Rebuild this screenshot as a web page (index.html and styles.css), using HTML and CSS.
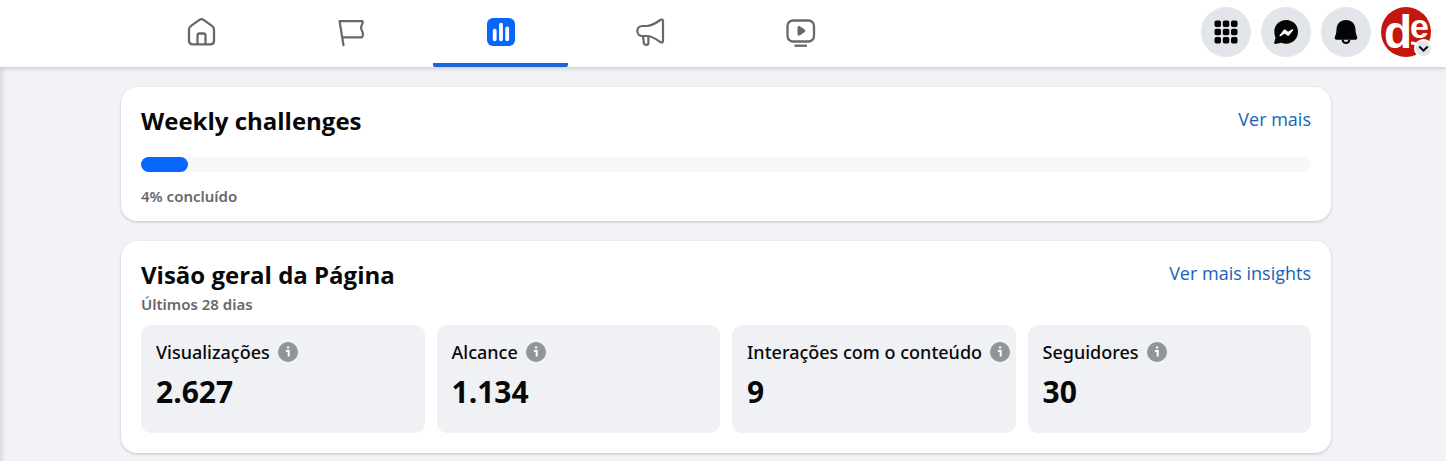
FILE: index.html
```html
<!DOCTYPE html>
<html lang="pt-BR">
<head>
  <meta charset="UTF-8">
  <meta name="viewport" content="width=device-width, initial-scale=1.0">
  <title>Visão geral da Página</title>
  <link rel="stylesheet" href="styles.css">
</head>
<body>
  <header class="topbar">
    <nav class="tabs">
      <a class="tab" href="#" aria-label="Página inicial">
        <svg class="tab-icon" viewBox="0 0 30 30" fill="none" stroke="currentColor" stroke-width="2.3" stroke-linejoin="round">
          <path d="M3 12.600c0-1.700.8-2.900 2-3.700l8.400-6c1.400-1 2.800-1 4.200 0l8.400 6c1.200.8 2 2 2 3.700v11.200c0 2.500-1.300 3.600-3.600 3.600H6.600c-2.300 0-3.600-1.100-3.600-3.600z"/>
          <path d="M11.500 27.200V18.500c0-1.300.8-2 2-2h4c1.200 0 2 .7 2 2v8.700"/>
        </svg>
      </a>
      <a class="tab" href="#" aria-label="Páginas">
        <svg class="tab-icon" viewBox="0 0 30 30" fill="none" stroke="currentColor" stroke-width="2.200" stroke-linejoin="round" stroke-linecap="round">
          <path d="M7.500 28.200L3.600 4.200H25.800c1 0 1.200.9.800 1.700-2 4.300-2 5.500 0 9.300.6 1.300.3 5.100-1.100 5.100H6.300"/>
        </svg>
      </a>
      <a class="tab active" href="#" aria-label="Insights" aria-current="page">
        <svg class="tab-icon" viewBox="0 0 30 30">
          <rect x="1" y="1" width="28" height="28" rx="6" fill="currentColor"/>
          <path d="M8.700 13.700v8.600M15 7.700v14.600M21.200 11.500v10.800" stroke="#fff" stroke-width="3.800" stroke-linecap="round"/>
        </svg>
      </a>
      <a class="tab" href="#" aria-label="Anúncios">
        <svg class="tab-icon" viewBox="0 0 30 30" fill="none" stroke="currentColor" stroke-width="2.200" stroke-linejoin="round">
          <path d="M6.500 9h4.100c5.500 0 9.600-3.200 13.700-6 1.400-.9 2.700-.6 2.700 1.200v19.600c0 1.800-1.300 2.100-2.700 1.200-4.100-2.900-8.200-6-13.700-6H6.500c-3.100 0-5.200-2-5.200-5s2.100-5 5.200-5z"/>
          <path d="M7 19l.8 6.700c.3 2.900 4.600 2.900 4.600 0V19"/>
        </svg>
      </a>
      <a class="tab" href="#" aria-label="Vídeo">
        <svg class="tab-icon" viewBox="0 0 30 30" fill="none" stroke="currentColor" stroke-width="2.300">
          <rect x="1.500" y="3.500" width="26.500" height="21" rx="5.500"/>
          <path d="M8.500 28.700h12.500"/>
          <path d="M12 10.300c0-.9.800-1.200 1.500-.8l5 3.400c.8.500.8 1.300 0 1.800l-5 3.400c-.7.400-1.500.1-1.500-.8z" fill="currentColor" stroke-width="1"/>
        </svg>
      </a>
    </nav>

    <div class="actions">
      <button class="round-btn" type="button" aria-label="Menu">
        <svg class="action-icon" viewBox="0 0 24 24">
          <rect x="0.500" y="0.500" width="6.500" height="6.500" rx="1.700"/>
          <rect x="8.800" y="0.500" width="6.500" height="6.500" rx="1.700"/>
          <rect x="17" y="0.500" width="6.500" height="6.500" rx="1.700"/>
          <rect x="0.500" y="8.800" width="6.500" height="6.500" rx="1.700"/>
          <rect x="8.800" y="8.800" width="6.500" height="6.500" rx="1.700"/>
          <rect x="17" y="8.800" width="6.500" height="6.500" rx="1.700"/>
          <rect x="0.500" y="17" width="6.500" height="6.500" rx="1.700"/>
          <rect x="8.800" y="17" width="6.500" height="6.500" rx="1.700"/>
          <rect x="17" y="17" width="6.500" height="6.500" rx="1.700"/>
        </svg>
      </button>
      <button class="round-btn" type="button" aria-label="Messenger">
        <svg class="action-icon" viewBox="0 0 24 24">
          <path d="M12.200 0C18.900 0 24 5 24 11.800s-5.100 12-11.800 12c-1.700 0-3.400-.3-4.900-1L1.400 24c-.9.100-1.400-.5-1.200-1.300l1.300-5C.7 15.900.3 13.900.3 11.800.3 5 5.500 0 12.200 0z"/>
          <path d="M5.600 15.200l4-5.200c.5-.6 1.300-.7 1.900-.2l2.500 2 4.200-2.500c.8-.5 1.500.3.9 1l-3.900 4.900c-.5.600-1.300.7-1.900.2l-2.500-1.900-4.200 2.700c-.8.400-1.500-.3-1-1z" fill="#fff"/>
        </svg>
      </button>
      <button class="round-btn" type="button" aria-label="Notificações">
        <svg class="action-icon" viewBox="0 0 24 24">
          <path d="M12 0c5.500 0 9.300 3.900 9.500 9.300.1 3.600.5 4.700 1.500 7.200.7 1.800.2 3.300-1.700 3.300H2.700C.8 19.800.3 18.300 1 16.500c1-2.500 1.400-3.600 1.500-7.200C2.700 3.900 6.500 0 12 0z"/>
          <path d="M8.600 19.500c.1 4.600 6.700 4.600 6.800 0" fill="none" stroke="#050505" stroke-width="2"/>
        </svg>
      </button>
      <button class="profile-btn" type="button" aria-label="Sua conta">
        <svg class="avatar" viewBox="0 0 50 50">
          <circle cx="25" cy="25" r="25" fill="#c4160c"/>
          <text class="logo-letter" x="3" y="41" font-size="46">d</text>
          <text class="logo-letter" x="29" y="31" font-size="34">e</text>
          <path d="M30 36q6 0 9 5" fill="none" stroke="#fff" stroke-width="3"/>
        </svg>
        <span class="profile-badge">
          <svg class="chevron" viewBox="0 0 10 10"><path d="M1.200 3.200L5 7l3.800-3.800" fill="none" stroke="#050505" stroke-width="1.800"/></svg>
        </span>
      </button>
    </div>
  </header>

  <main class="content">
    <section class="card challenges">
      <div class="card-header">
        <h2>Weekly challenges</h2>
        <a class="more" href="#">Ver mais</a>
      </div>
      <div class="progress" role="progressbar" aria-label="Weekly challenges" aria-valuenow="4" aria-valuemin="0" aria-valuemax="100">
        <div class="progress-fill" style="width: 4%"></div>
      </div>
      <p class="note">4% concluído</p>
    </section>

    <section class="card">
      <div class="card-header">
        <h2>Visão geral da Página</h2>
        <a class="more" href="#">Ver mais insights</a>
      </div>
      <p class="note">Últimos 28 dias</p>
      <div class="stats">
        <div class="stat">
          <div class="stat-label">Visualizações
            <svg class="info" viewBox="0 0 20 20"><circle cx="10" cy="10" r="10"/><path d="M9 5.500h2.200M8 9h2.700v5.500"/></svg>
          </div>
          <div class="stat-value">2.627</div>
        </div>
        <div class="stat">
          <div class="stat-label">Alcance
            <svg class="info" viewBox="0 0 20 20"><circle cx="10" cy="10" r="10"/><path d="M9 5.500h2.200M8 9h2.700v5.500"/></svg>
          </div>
          <div class="stat-value">1.134</div>
        </div>
        <div class="stat">
          <div class="stat-label">Interações com o conteúdo
            <svg class="info" viewBox="0 0 20 20"><circle cx="10" cy="10" r="10"/><path d="M9 5.500h2.200M8 9h2.700v5.500"/></svg>
          </div>
          <div class="stat-value">9</div>
        </div>
        <div class="stat">
          <div class="stat-label">Seguidores
            <svg class="info" viewBox="0 0 20 20"><circle cx="10" cy="10" r="10"/><path d="M9 5.500h2.200M8 9h2.700v5.500"/></svg>
          </div>
          <div class="stat-value">30</div>
        </div>
      </div>
    </section>
  </main>
</body>
</html>
```
FILE: styles.css
```css
* {
  box-sizing: border-box;
}
body {
  margin: 0;
  min-height: 100vh;
  display: flex;
  flex-direction: column;
  font-family: "Segoe UI", "Open Sans", sans-serif;
  color: #080809;
  background: #f2f3f7;
}
h2, p {
  margin: 0;
}
a {
  text-decoration: none;
}
button {
  padding: 0;
  border: 0;
  cursor: pointer;
}

/* top bar */
.topbar {
  display: flex;
  justify-content: space-between;
  height: 67px;
  padding: 0 15px 0 133px;
  background: #fff;
  box-shadow: 0 1px 5px rgba(0, 0, 0, 0.2);
  z-index: 1;
}
.tabs {
  display: flex;
  gap: 15px;
}
.tab {
  display: flex;
  justify-content: center;
  align-items: center;
  width: 135px;
  border-top: 1px solid transparent;
  border-bottom: 4px solid transparent;
  color: #65686c;
}
.tab.active {
  color: #0866ff;
  border-bottom-color: #1d63d8;
  border-radius: 2px;
}
.tab-icon {
  width: 30px;
  height: 30px;
}
.actions {
  display: flex;
  align-items: center;
  gap: 10px;
  padding-bottom: 3px;
}
.round-btn {
  display: flex;
  justify-content: center;
  align-items: center;
  width: 50px;
  height: 50px;
  border-radius: 50%;
  background: #e2e5e9;
}
.action-icon {
  width: 24px;
  height: 24px;
  fill: #050505;
}
.profile-btn {
  position: relative;
  width: 50px;
  height: 50px;
  border-radius: 50%;
  background: none;
}
.avatar {
  display: block;
}
.logo-letter {
  font-family: "Liberation Sans Narrow", "Liberation Sans", sans-serif;
  font-weight: bold;
  fill: #fff;
}
.profile-badge {
  position: absolute;
  right: -2px;
  bottom: -1px;
  display: flex;
  justify-content: center;
  align-items: center;
  width: 19px;
  height: 19px;
  border: 2px solid #fff;
  border-radius: 50%;
  background: #e2e5e9;
}
.chevron {
  width: 11px;
  height: 11px;
}

/* cards */
.content {
  flex: 1;
  display: flex;
  flex-direction: column;
  align-items: center;
  gap: 20px;
  padding: 20px 15px 8px 21px;
  box-shadow: inset 5px 0 5px -3px rgba(0, 0, 0, 0.12);
}
.card {
  width: 100%;
  max-width: 1210px;
  padding: 20px;
  border-radius: 16px;
  background: #fff;
  box-shadow: 0 1px 3px rgba(0, 0, 0, 0.2);
}
.challenges {
  padding-bottom: 15px;
}
.card-header {
  display: flex;
  justify-content: space-between;
}
h2 {
  font-size: 24px;
  line-height: 28px;
}
.more {
  font-size: 18px;
  line-height: 24px;
  color: #1763b6;
}
.progress {
  height: 15px;
  margin: 22px 0 14px;
  border-radius: 8px;
  background: #f7f8fa;
}
.progress-fill {
  height: 100%;
  border-radius: 8px;
  background: #0866ff;
}
.note {
  font-family: "Segoe UI", "Noto Sans", sans-serif;
  font-size: 15px;
  font-weight: 600;
  line-height: 20px;
  color: #65686c;
}
.card-header + .note {
  margin: 5px 0 11px;
}
.stats {
  display: grid;
  grid-template-columns: repeat(4, 1fr);
  gap: 12px;
}
.stat {
  height: 108px;
  padding: 15px 0 0 15px;
  border-radius: 10px;
  background: #f0f1f5;
}
.stat-label {
  display: flex;
  align-items: center;
  gap: 8px;
  font-family: "Segoe UI", "Noto Sans", sans-serif;
  font-size: 18px;
  font-weight: 500;
  line-height: 24px;
  white-space: nowrap;
}
.stat-value {
  margin-top: 10px;
  font-size: 30px;
  font-weight: bold;
  line-height: 36px;
}
.info {
  width: 20px;
  height: 20px;
  fill: #8f949d;
}
.info path {
  fill: none;
  stroke: #fff;
  stroke-width: 2;
}
```
